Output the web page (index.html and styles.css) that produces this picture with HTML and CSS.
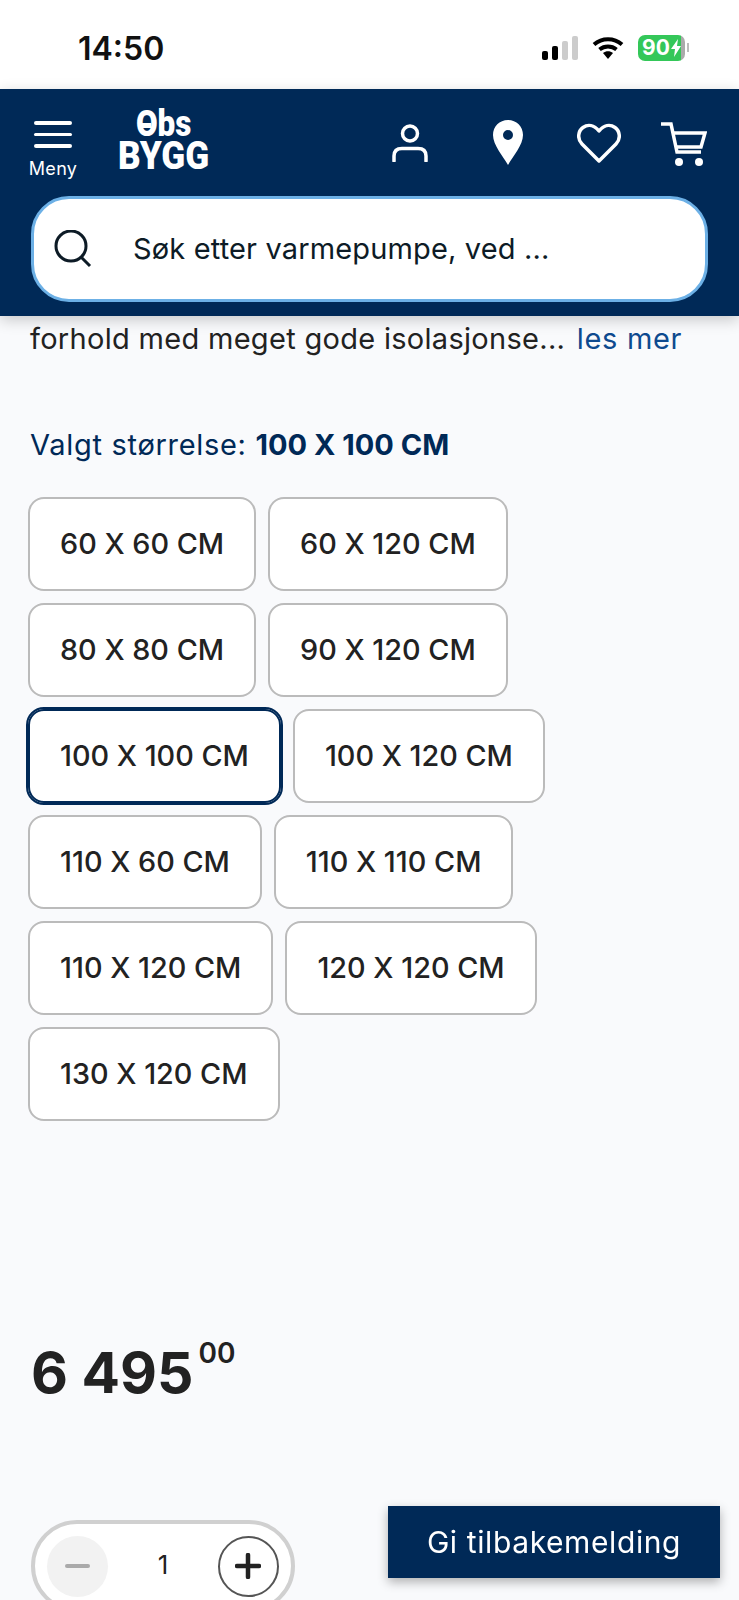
FILE: index.html
```html
<!DOCTYPE html>
<html lang="no">
<head>
  <meta charset="UTF-8">
  <meta name="viewport" content="width=device-width, initial-scale=1.0">
  <title>Obs BYGG</title>
  <link rel="stylesheet" href="styles.css">
</head>
<body>
  <div class="statusbar">
    <span class="clock">14:50</span>
    <div class="status-icons">
      <div class="signal">
        <span class="bar bar-1"></span>
        <span class="bar bar-2"></span>
        <span class="bar bar-3"></span>
        <span class="bar bar-4"></span>
      </div>
      <svg class="wifi" width="32" height="24" viewBox="0 0 32 24">
        <path d="M2 8.5 C10 1.5 22 1.5 30 8.5" fill="none" stroke="#000" stroke-width="4"/>
        <path d="M7.5 13.5 C12.5 9.5 19.500 9.500 24.500 13.500" fill="none" stroke="#000" stroke-width="4"/>
        <path d="M11 17 C14 14.500 18 14.500 21 17 L16 23 Z" fill="#000"/>
      </svg>
      <div class="battery">
        <div class="battery-body">
          <span class="battery-level">90</span>
          <svg class="bolt" width="10" height="18" viewBox="0 0 10 18"><path d="M7 0 L0 10 H4 L3 18 L10 7 H6 Z" fill="#fff"/></svg>
        </div>
        <span class="battery-nub"></span>
      </div>
    </div>
  </div>

  <header class="site-header">
    <div class="header-top">
      <div class="menu-btn">
        <span class="menu-line"></span>
        <span class="menu-line"></span>
        <span class="menu-line"></span>
        <span class="menu-label">Meny</span>
      </div>
      <div class="logo">
        <span class="logo-obs">Obs</span>
        <span class="logo-bygg">BYGG</span>
      </div>
      <div class="header-icons">
        <svg class="icon-user" width="36" height="38" viewBox="0 0 36 38" fill="none" stroke="#fff" stroke-width="3.500">
          <circle cx="18" cy="9.500" r="7.500"/>
          <path d="M2 37 V32 C2 27 5 24.500 10 24.500 H26 C31 24.500 34 27 34 32 V37" stroke-linecap="round"/>
        </svg>
        <svg class="icon-pin" width="30" height="45" viewBox="0 0 30 45">
          <path fill-rule="evenodd" fill="#fff" d="M15 0 C6.500 0 0 6.500 0 15 C0 25 10 36 15 45 C20 36 30 25 30 15 C30 6.500 23.500 0 15 0 Z M15 10 A5 5 0 1 1 15 20 A5 5 0 1 1 15 10 Z"/>
        </svg>
        <svg class="icon-heart" width="44" height="40" viewBox="0 0 44 40" fill="none" stroke="#fff" stroke-width="3.500" stroke-linejoin="round">
          <path d="M22 38 L5 21 C0 16 1 8 6 4.500 C11 1 17 2 22 8 C27 2 33 1 38 4.500 C43 8 44 16 39 21 Z"/>
        </svg>
        <svg class="icon-cart" width="46" height="44" viewBox="0 0 46 44" fill="none" stroke="#fff" stroke-width="3.500">
          <path d="M0 2 H10 L16 30 H40"/>
          <path d="M12 11 H44 L40 25 H15"/>
          <circle cx="18" cy="40" r="4" fill="#fff" stroke="none"/>
          <circle cx="38" cy="40" r="4" fill="#fff" stroke="none"/>
        </svg>
      </div>
    </div>
    <div class="search">
      <svg class="search-icon" width="38" height="38" viewBox="0 0 38 38" fill="none" stroke="#0d1b26" stroke-width="3">
        <circle cx="17" cy="16" r="15"/>
        <path d="M27 27 L36 36"/>
      </svg>
      <span class="search-text">Søk etter varmepumpe, ved ...</span>
    </div>
  </header>

  <main class="content">
    <p class="desc">forhold med meget gode isolasjonse... <a class="more" href="#">les mer</a></p>
    <p class="chosen">Valgt størrelse: <strong>100 X 100 CM</strong></p>

    <div class="sizes">
      <div class="size-row"><button class="size">60 X 60 CM</button><button class="size">60 X 120 CM</button></div>
      <div class="size-row"><button class="size">80 X 80 CM</button><button class="size">90 X 120 CM</button></div>
      <div class="size-row"><button class="size selected">100 X 100 CM</button><button class="size">100 X 120 CM</button></div>
      <div class="size-row"><button class="size">110 X 60 CM</button><button class="size">110 X 110 CM</button></div>
      <div class="size-row"><button class="size">110 X 120 CM</button><button class="size">120 X 120 CM</button></div>
      <div class="size-row"><button class="size">130 X 120 CM</button></div>
    </div>

    <div class="price"><span class="price-main">6 495</span><span class="price-dec">00</span></div>

    <div class="stepper">
      <span class="step step-minus"><span class="step-dash"></span></span>
      <span class="qty">1</span>
      <span class="step step-plus">
        <svg width="26" height="26" viewBox="0 0 26 26"><path d="M13 2 V24 M2 13 H24" stroke="#222" stroke-width="4.500" stroke-linecap="round"/></svg>
      </span>
    </div>
  </main>

  <button class="feedback">Gi tilbakemelding</button>
</body>
</html>
```

FILE: styles.css
```css
* {
  box-sizing: border-box;
}
html, body {
  height: 1600px;
  overflow: hidden;
}
body {
  margin: 0;
  background-color: #f9fafc;
  font-family: Inter, "Noto Sans", sans-serif;
  color: #222;
}

/* status bar */
.statusbar {
  height: 89px;
  background: #fff;
  display: flex;
  justify-content: space-between;
  align-items: center;
  padding: 8px 50px 0 78px;
}
.clock {
  font-size: 32px;
  font-weight: 600;
  color: #111;
}
.status-icons {
  display: flex;
  align-items: center;
  gap: 14px;
  margin-top: -2px;
}
.signal {
  display: flex;
  align-items: flex-end;
  gap: 4px;
  height: 24px;
}
.bar {
  width: 6px;
  border-radius: 2px;
  background: #000;
}
.bar-1 { height: 9px; }
.bar-2 { height: 14px; }
.bar-3 { height: 19px; background: #ccc; }
.bar-4 { height: 24px; background: #ccc; }
.battery {
  display: flex;
  align-items: center;
  gap: 2px;
}
.battery-body {
  width: 47px;
  height: 26px;
  border-radius: 7px;
  background: linear-gradient(to right, #34c759 92%, #aaa 92%);
  display: flex;
  align-items: center;
  padding-left: 4px;
  gap: 1px;
}
.battery-level {
  color: #fff;
  font-size: 21px;
  font-weight: 700;
}
.battery-nub {
  width: 2px;
  height: 9px;
  background: #bbb;
}

/* header */
.site-header {
  position: relative;
  z-index: 2;
  height: 227px;
  background: #002957;
  box-shadow: 0 4px 14px rgba(0, 0, 0, 0.2);
}
.header-top {
  display: flex;
  height: 107px;
  align-items: flex-start;
}
.menu-btn {
  width: 48px;
  margin-left: 29px;
  padding-top: 32px;
  display: flex;
  flex-direction: column;
  align-items: center;
}
.menu-line {
  width: 38px;
  height: 3.5px;
  border-radius: 2px;
  background: #fff;
  margin-bottom: 8px;
}
.menu-label {
  color: #fff;
  font-size: 18px;
  line-height: 22px;
  margin-top: 2px;
  letter-spacing: 0.3px;
}
.logo {
  margin-left: 42px;
  width: 90px;
  padding-top: 18px;
  color: #fff;
  font-family: "Roboto", sans-serif;
  font-weight: 900;
  display: flex;
  flex-direction: column;
  align-items: center;
}
.logo-obs {
  position: relative;
  font-size: 37px;
  line-height: 33px;
  transform: scaleX(0.85);
}
/* crossbar through the O */
.logo-obs::before {
  content: "";
  position: absolute;
  left: 4px;
  top: 16px;
  width: 14px;
  height: 5px;
  background: #fff;
}
.logo-bygg {
  font-size: 39px;
  line-height: 33px;
  transform: scaleX(0.9);
}
.header-icons {
  margin-left: auto;
  display: flex;
  align-items: flex-start;
  padding-right: 32px;
}
.icon-user { margin-top: 35px; margin-right: 65px; }
.icon-pin { margin-top: 31px; margin-right: 54px; }
.icon-heart { margin-top: 34px; margin-right: 40px; }
.icon-cart { margin-top: 33px; }
.search {
  margin: 0 31px;
  height: 106px;
  background: #fff;
  border: 3.5px solid #6cb0e6;
  border-radius: 38px;
  display: flex;
  align-items: center;
  padding-left: 20px;
}
.search-text {
  margin-left: 41px;
  margin-top: -2px;
  font-size: 29px;
  letter-spacing: 0.15px;
  color: #0d1b26;
}

/* product */
.content {
  padding: 0 28px;
}
.desc {
  margin: 0;
  padding: 4px 0 0 2px;
  font-size: 29px;
  letter-spacing: 0.3px;
  line-height: 38px;
  color: #222;
}
.more {
  color: #0e4a8f;
  text-decoration: none;
  margin-left: 3px;
  letter-spacing: 0.7px;
}
.chosen {
  margin: 68px 0 0;
  padding-left: 2px;
  font-size: 29px;
  letter-spacing: 0.7px;
  line-height: 38px;
  color: #002957;
}
.chosen strong {
  letter-spacing: 0;
}
.sizes {
  margin-top: 33px;
  display: flex;
  flex-direction: column;
  gap: 12px;
}
.size-row {
  display: flex;
  gap: 12px;
}
.size {
  height: 94px;
  padding: 0 30px 2px;
  background: #fff;
  border: 2px solid #bbb;
  border-radius: 16px;
  font-family: inherit;
  font-size: 28.8px;
  font-weight: 450;
  color: #222;
}
.size.selected {
  border-color: #002957;
  outline: 2px solid #002957;
}
.price {
  margin-top: 218px;
  padding-left: 3px;
  display: flex;
  align-items: flex-start;
}
.price-main {
  font-size: 57px;
  font-weight: 700;
  line-height: 68px;
}
.price-dec {
  font-size: 28px;
  font-weight: 600;
  line-height: 34px;
  margin-left: 5px;
  margin-top: -3px;
}
.stepper {
  margin: 113px 0 0 3px;
  width: 264px;
  height: 92px;
  background: #fff;
  border: 4px solid #d0d0d0;
  border-radius: 46px;
  display: flex;
  align-items: center;
  justify-content: space-between;
  padding: 0 12px;
}
.step {
  width: 61px;
  height: 61px;
  border-radius: 50%;
  display: flex;
  align-items: center;
  justify-content: center;
}
.step-minus {
  background: #f2f2f2;
}
.step-dash {
  width: 25px;
  height: 4px;
  border-radius: 2px;
  background: #aaa;
}
.step-plus {
  border: 2px solid #555;
}
.qty {
  font-size: 26px;
  margin-top: -4px;
}

/* floating feedback button */
.feedback {
  position: fixed;
  left: 388px;
  top: 1506px;
  width: 332px;
  height: 72px;
  border: none;
  background: #002957;
  color: #fff;
  font-family: inherit;
  font-size: 30px;
  letter-spacing: 0.6px;
  box-shadow: 0 4px 10px rgba(0, 0, 0, 0.3);
}
```
